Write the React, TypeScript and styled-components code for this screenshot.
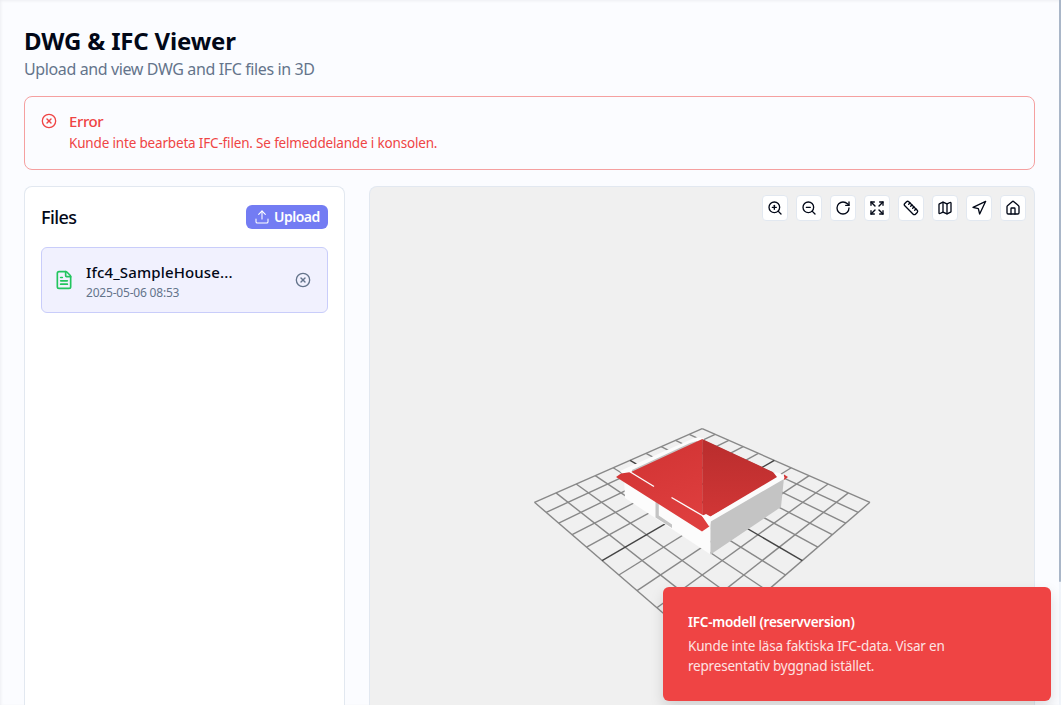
import React from "react";
import styled, { createGlobalStyle, css } from "styled-components";
import {
  CircleX, Upload, FileText, ZoomIn, ZoomOut, RotateCw, Expand, Ruler, Map as MapIcon, Navigation, House,
} from "lucide-react";

const GlobalStyle = createGlobalStyle`
  *, *::before, *::after { box-sizing: border-box; }
  body {
    margin: 0;
    height: 705px;
    overflow: hidden;
    background: #fbfcff;
    color: #020817;
    font-family: "Segoe UI", "Noto Sans", "Open Sans", sans-serif;
    font-size: 16px;
    line-height: 24px;
  }
  h1, h2, p { margin: 0; }
`;

const Page = styled.div`
  height: 705px;
  overflow: hidden;
  display: flex;
  box-shadow: inset 1px 1px 3px rgba(15, 23, 42, 0.06);
`;

const Main = styled.main`
  flex: 1;
  padding: 25px 24px 0;
  display: flex;
  flex-direction: column;
  min-width: 0;
`;

const ScrollTrack = styled.div`
  width: 2px;
  height: 705px;
  background: #f1f5fb;
`;

const ScrollThumb = styled.div`
  height: 582px;
  background: #a9b6c8;
  border-radius: 0 0 2px 2px;
`;

const Title = styled.h1`
  font-size: 24px;
  line-height: 32px;
  font-weight: 700;
  height: 32px;
`;

const Line = styled.span<{ $w: number }>`
  display: inline-block;
  white-space: nowrap;
  letter-spacing: ${(p) => p.$w}px;
`;

const Subtitle = styled.p`
  color: #64748b;
  height: 24px;
`;

const Alert = styled.section`
  margin-top: 15px;
  height: 74px;
  flex: none;
  display: flex;
  gap: 12px;
  padding: 14px 16px;
  border: 1px solid #f5a0a0;
  border-radius: 8px;
  color: #ef4444;

  & > svg {
    margin-top: 2px;
  }
`;

const AlertTitle = styled.h2`
  font-size: 15px;
  line-height: 20px;
  font-weight: 500;
`;

const AlertText = styled.p`
  font-size: 13.5px;
  line-height: 24px;
`;

const Columns = styled.div`
  margin-top: 16px;
  flex: 1;
  display: grid;
  grid-template-columns: 321px 1fr;
  gap: 24px;
`;

const panel = css`
  border: 1px solid #e2e8f0;
  border-bottom: 0;
  border-radius: 8px 8px 0 0;
`;

const FilesPanel = styled.aside`
  ${panel}
  background: #fff;
  padding: 16px;
`;

const FilesHeader = styled.div`
  display: flex;
  justify-content: space-between;
  align-items: center;
  height: 28px;
`;

const FilesTitle = styled.h2`
  font-size: 18px;
  line-height: 28px;
  font-weight: 500;
`;

const UploadButton = styled.button`
  display: flex;
  align-items: center;
  gap: 4px;
  width: 82px;
  height: 24px;
  padding: 0 0 0 8px;
  border: 0;
  border-radius: 6px;
  background: #737cf3;
  color: #fff;
  font: 600 14px/24px "Segoe UI", "Noto Sans", sans-serif;
`;

const FileCard = styled.div`
  margin-top: 16px;
  height: 66px;
  display: flex;
  align-items: center;
  padding: 0 16px 0 12px;
  border: 1px solid #c9cdfa;
  border-radius: 6px;
  background: #f1f1fe;
`;

const FileInfo = styled.div`
  flex: 1;
  margin-left: 12px;
  padding-top: 2px;
`;

const FileName = styled.p`
  font-size: 15px;
  line-height: 24px;
  font-weight: 500;
`;

const FileDate = styled.p`
  font-size: 12px;
  line-height: 18px;
  color: #64748b;
`;

const Viewer = styled.section`
  ${panel}
  position: relative;
  background: #f0f0f0;
  overflow: hidden;
`;

const Toolbar = styled.div`
  position: absolute;
  top: 8px;
  right: 8px;
  display: flex;
  gap: 8px;
`;

const ToolButton = styled.button`
  display: flex;
  align-items: center;
  justify-content: center;
  width: 26px;
  height: 26px;
  padding: 0;
  border: 1px solid #e2e8f0;
  border-radius: 4px;
  background: #fff;
  color: #020817;
`;

const Scene = styled.svg`
  display: block;
`;

const Toast = styled.div`
  position: absolute;
  left: 663px;
  top: 587px;
  width: 388px;
  height: 114px;
  padding: 25px;
  border-radius: 6px;
  background: #ef4444;
  color: #fff;
  box-shadow: 0 6px 14px rgba(0, 0, 0, 0.13);
`;

const ToastTitle = styled.p`
  font-size: 13.5px;
  line-height: 20px;
  font-weight: 600;
`;

const ToastText = styled.p`
  margin-top: 4px;
  font-size: 13.5px;
  line-height: 20px;
  color: #fde3e3;
`;

/* Ground plane coordinates run from -5 to 5 on both axes. */
const project = (a: number, b: number) => {
  const v = a + b;
  const w = 1 - 0.0325 * v;
  return [702.2 + (16.77 * (a - b)) / w, (502.3 - 6.57 * v) / w];
};

const GridLine = ({ from, to, dark }: { from: number[]; to: number[]; dark: boolean }) => (
  <line x1={from[0]} y1={from[1]} x2={to[0]} y2={to[1]} stroke={dark ? "#444" : "#888"} strokeWidth={1.4} />
);

const ticks = [-5, -4, -3, -2, -1, 1, 2, 3, 4, 5, 0];

const House3D = () => (
  <g>
    <polygon fill="#fcfcfc" points="620,471 630,466.5 693,438.5 698,437 704,438.5 703,442 640,472 624,476" />
    <polygon fill="#c4c4c4" points="632,470 690,443 697,441 699,443 632,473.5" />
    <polygon fill="#fcfcfc" points="624,478 711,518 710.5,554.5 625,498" />
    <polygon fill="#c4c4c4" points="655.5,500 658.8,502 658.8,515.5 672,524.5 672,528 655.5,517.5" />
    <polygon fill="url(#slopeLeft)" points="616,477 621,473.5 631,472 702.3,439 702.3,516 710,526 702,531.5" />
    <polygon fill="url(#slopeRight)" points="702.2,439 775,473 778,478 710,517 702.2,515.5" />
    <polygon fill="#d43535" points="784,474.5 788,477 784,480" />
    <polygon fill="#c4c4c4" points="784,478 781,507 710.5,554.5 710.5,520" />
    <polygon fill="#fcfcfc" points="773,472 780,473 784.5,477 784,479 710.8,521.5 709.5,527 702,516 706,514 710.5,516.5 777,477" />
    <path d="M629.5 471.5 654 486.5M671.5 497.5 704 516.5" stroke="#fcfcfc" strokeWidth="1.4" />
  </g>
);

const tools = [ZoomIn, ZoomOut, RotateCw, Expand, Ruler, MapIcon, Navigation, House];

export default function App() {
  return (
    <>
      <GlobalStyle />
      <Page>
        <Main>
          <Title><Line $w={-0.17}>DWG &amp; IFC Viewer</Line></Title>
          <Subtitle><Line $w={-0.38}>Upload and view DWG and IFC files in 3D</Line></Subtitle>
          <Alert>
            <CircleX size={16} />
            <div>
              <AlertTitle><Line $w={-0.4}>Error</Line></AlertTitle>
              <AlertText><Line $w={-0.17}>Kunde inte bearbeta IFC-filen. Se felmeddelande i konsolen.</Line></AlertText>
            </div>
          </Alert>
          <Columns>
            <FilesPanel>
              <FilesHeader>
                <FilesTitle><Line $w={-0.55}>Files</Line></FilesTitle>
                <UploadButton><Upload size={16} strokeWidth={1.6} /><Line $w={-0.5}>Upload</Line></UploadButton>
              </FilesHeader>
              <FileCard>
                <FileText size={20} color="#22c55e" />
                <FileInfo>
                  <FileName><Line $w={0.14}>Ifc4_SampleHouse...</Line></FileName>
                  <FileDate><Line $w={-0.2}>2025-05-06 08:53</Line></FileDate>
                </FileInfo>
                <CircleX size={16} color="#64748b" />
              </FileCard>
            </FilesPanel>
            <Viewer>
              <Scene width="664" height="519" viewBox="370 187 664 519">
                <defs>
                  <linearGradient id="slopeLeft" x1="0" y1="0" x2="0.4" y2="1">
                    <stop offset="0" stopColor="#cf3232" />
                    <stop offset="1" stopColor="#de3e3e" />
                  </linearGradient>
                  <linearGradient id="slopeRight" x1="0" y1="0" x2="0" y2="1">
                    <stop offset="0" stopColor="#b92d2d" />
                    <stop offset="1" stopColor="#d13636" />
                  </linearGradient>
                </defs>
                {ticks.map((t) => (
                  <g key={t}>
                    <GridLine from={project(t, -5)} to={project(t, 5)} dark={t === 0} />
                    <GridLine from={project(-5, t)} to={project(5, t)} dark={t === 0} />
                  </g>
                ))}
                <House3D />
              </Scene>
              <Toolbar>
                {tools.map((Icon, i) => (
                  <ToolButton key={i}><Icon size={16} /></ToolButton>
                ))}
              </Toolbar>
            </Viewer>
          </Columns>
        </Main>
        <ScrollTrack><ScrollThumb /></ScrollTrack>
      </Page>
      <Toast>
        <ToastTitle><Line $w={-0.23}>IFC-modell (reservversion)</Line></ToastTitle>
        <ToastText>
          <Line $w={-0.17}>Kunde inte läsa faktiska IFC-data. Visar en</Line>
          <br />
          <Line $w={-0.2}>representativ byggnad istället.</Line>
        </ToastText>
      </Toast>
    </>
  );
}
